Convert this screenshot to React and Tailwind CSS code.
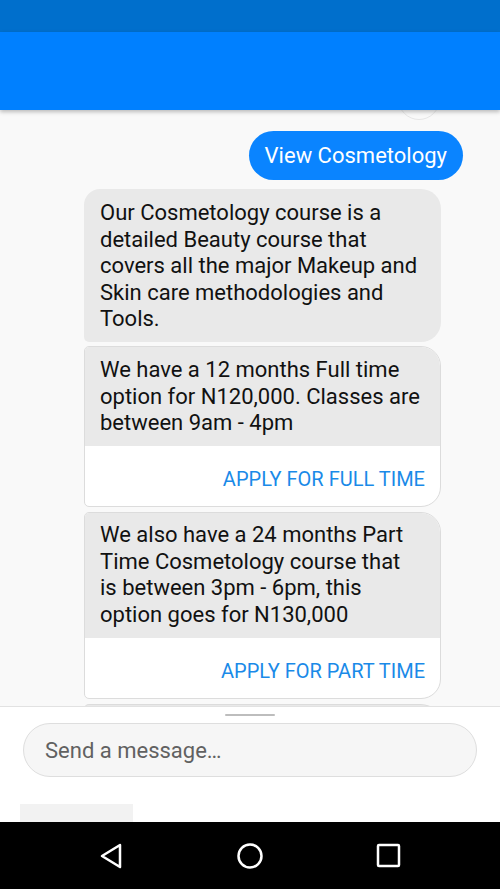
import React from "react";

export default function App() {
  const font = { fontFamily: "Roboto, 'Noto Sans', sans-serif" };
  return (
    <div className="w-[500px] h-[889px] flex flex-col overflow-hidden bg-[#f9f9f9]" style={font}>
      <div className="h-[32px] bg-[#006fcc] shrink-0" />
      <div className="h-[78px] bg-[#0080ff] shrink-0 relative z-10 shadow-[0_2px_4px_rgba(0,0,0,0.25)]" />
      <div className="flex-1 flex flex-col overflow-hidden bg-[#f9f9f9]">
        <div className="flex justify-end pr-[60px]">
          <div className="w-[42px] h-[42px] -mt-[32px] rounded-full bg-[#f9f9f9] border border-[#e6e6e6]" />
        </div>
        <div className="flex justify-end pr-[37px] mt-[11px]">
          <div className="h-[49px] px-[16px] rounded-full bg-[#0a84ff] text-white text-[22px] flex items-center">
            View Cosmetology
          </div>
        </div>
        <div className="flex flex-col gap-[4px] pl-[84px] w-[441px] mt-[9px]">
          <div className="bg-[#e9e9e9] rounded-tl-[16px] rounded-tr-[20px] rounded-br-[20px] rounded-bl-[5px] px-[16px] pt-[11px] pb-[10px] text-[22px] leading-[26.5px] text-[#111] h-[153px]">
            Our Cosmetology course is a detailed Beauty course that covers all the major Makeup and Skin care methodologies and Tools.
          </div>
          <div className="rounded-tl-[5px] rounded-bl-[5px] rounded-tr-[20px] rounded-br-[20px] border border-[#dcdcdc] overflow-hidden bg-white">
            <div className="bg-[#e9e9e9] pl-[15px] pr-[14px] pt-[10px] h-[99px] text-[22px] leading-[26.5px] text-[#111]">
              We have a 12 months Full time option for N120,000. Classes are between 9am - 4pm
            </div>
            <div className="h-[60px] pt-[5px] flex items-center justify-end pr-[15px] text-[20px] text-[#1a8ae8]">
              APPLY FOR FULL TIME
            </div>
          </div>
          <div className="rounded-tl-[5px] rounded-bl-[5px] rounded-tr-[20px] rounded-br-[20px] border border-[#dcdcdc] overflow-hidden bg-white mt-[1px]">
            <div className="bg-[#e9e9e9] pl-[15px] pr-[22px] pt-[9px] h-[125px] text-[22px] leading-[26.5px] text-[#111]">
              We also have a 24 months Part Time Cosmetology course that is between 3pm - 6pm, this option goes for N130,000
            </div>
            <div className="h-[60px] pt-[5px] flex items-center justify-end pr-[15px] text-[20px] text-[#1a8ae8]">
              APPLY FOR PART TIME
            </div>
          </div>
          <div className="h-[20px] mt-[1px] rounded-tl-[5px] rounded-tr-[20px] border border-[#dcdcdc] bg-[#e9e9e9]" />
        </div>
      </div>
      <div className="h-[116px] shrink-0 bg-white border-t border-[#e2e2e2] relative z-10 flex flex-col">
        <div className="flex justify-center pt-[7px]">
          <div className="w-[50px] h-[2px] bg-[#bdbdbd] rounded" />
        </div>
        <div className="mx-[23px] mt-[7px] h-[54px] rounded-full bg-[#f6f6f6] border border-[#dedede] flex items-center pl-[21px] text-[22px] text-[#616161]">
          Send a message…
        </div>
        <div className="ml-[20px] mt-[27px] w-[113px] h-[18px] bg-[#f2f2f2]" />
      </div>
      <div className="h-[67px] shrink-0 bg-black flex items-center pl-[98px]">
        <svg width="26" height="28" viewBox="0 0 26 28">
          <path d="M22 3 L4 14 L22 25 Z" fill="none" stroke="white" strokeWidth="2.5" strokeLinejoin="round" />
        </svg>
        <svg width="28" height="28" viewBox="0 0 28 28" className="ml-[112px]">
          <circle cx="14" cy="14" r="11.5" fill="none" stroke="white" strokeWidth="2.5" />
        </svg>
        <svg width="26" height="26" viewBox="0 0 26 26" className="ml-[112px]">
          <rect x="2" y="2" width="21" height="21" rx="1" fill="none" stroke="white" strokeWidth="2.5" />
        </svg>
      </div>
    </div>
  );
}
